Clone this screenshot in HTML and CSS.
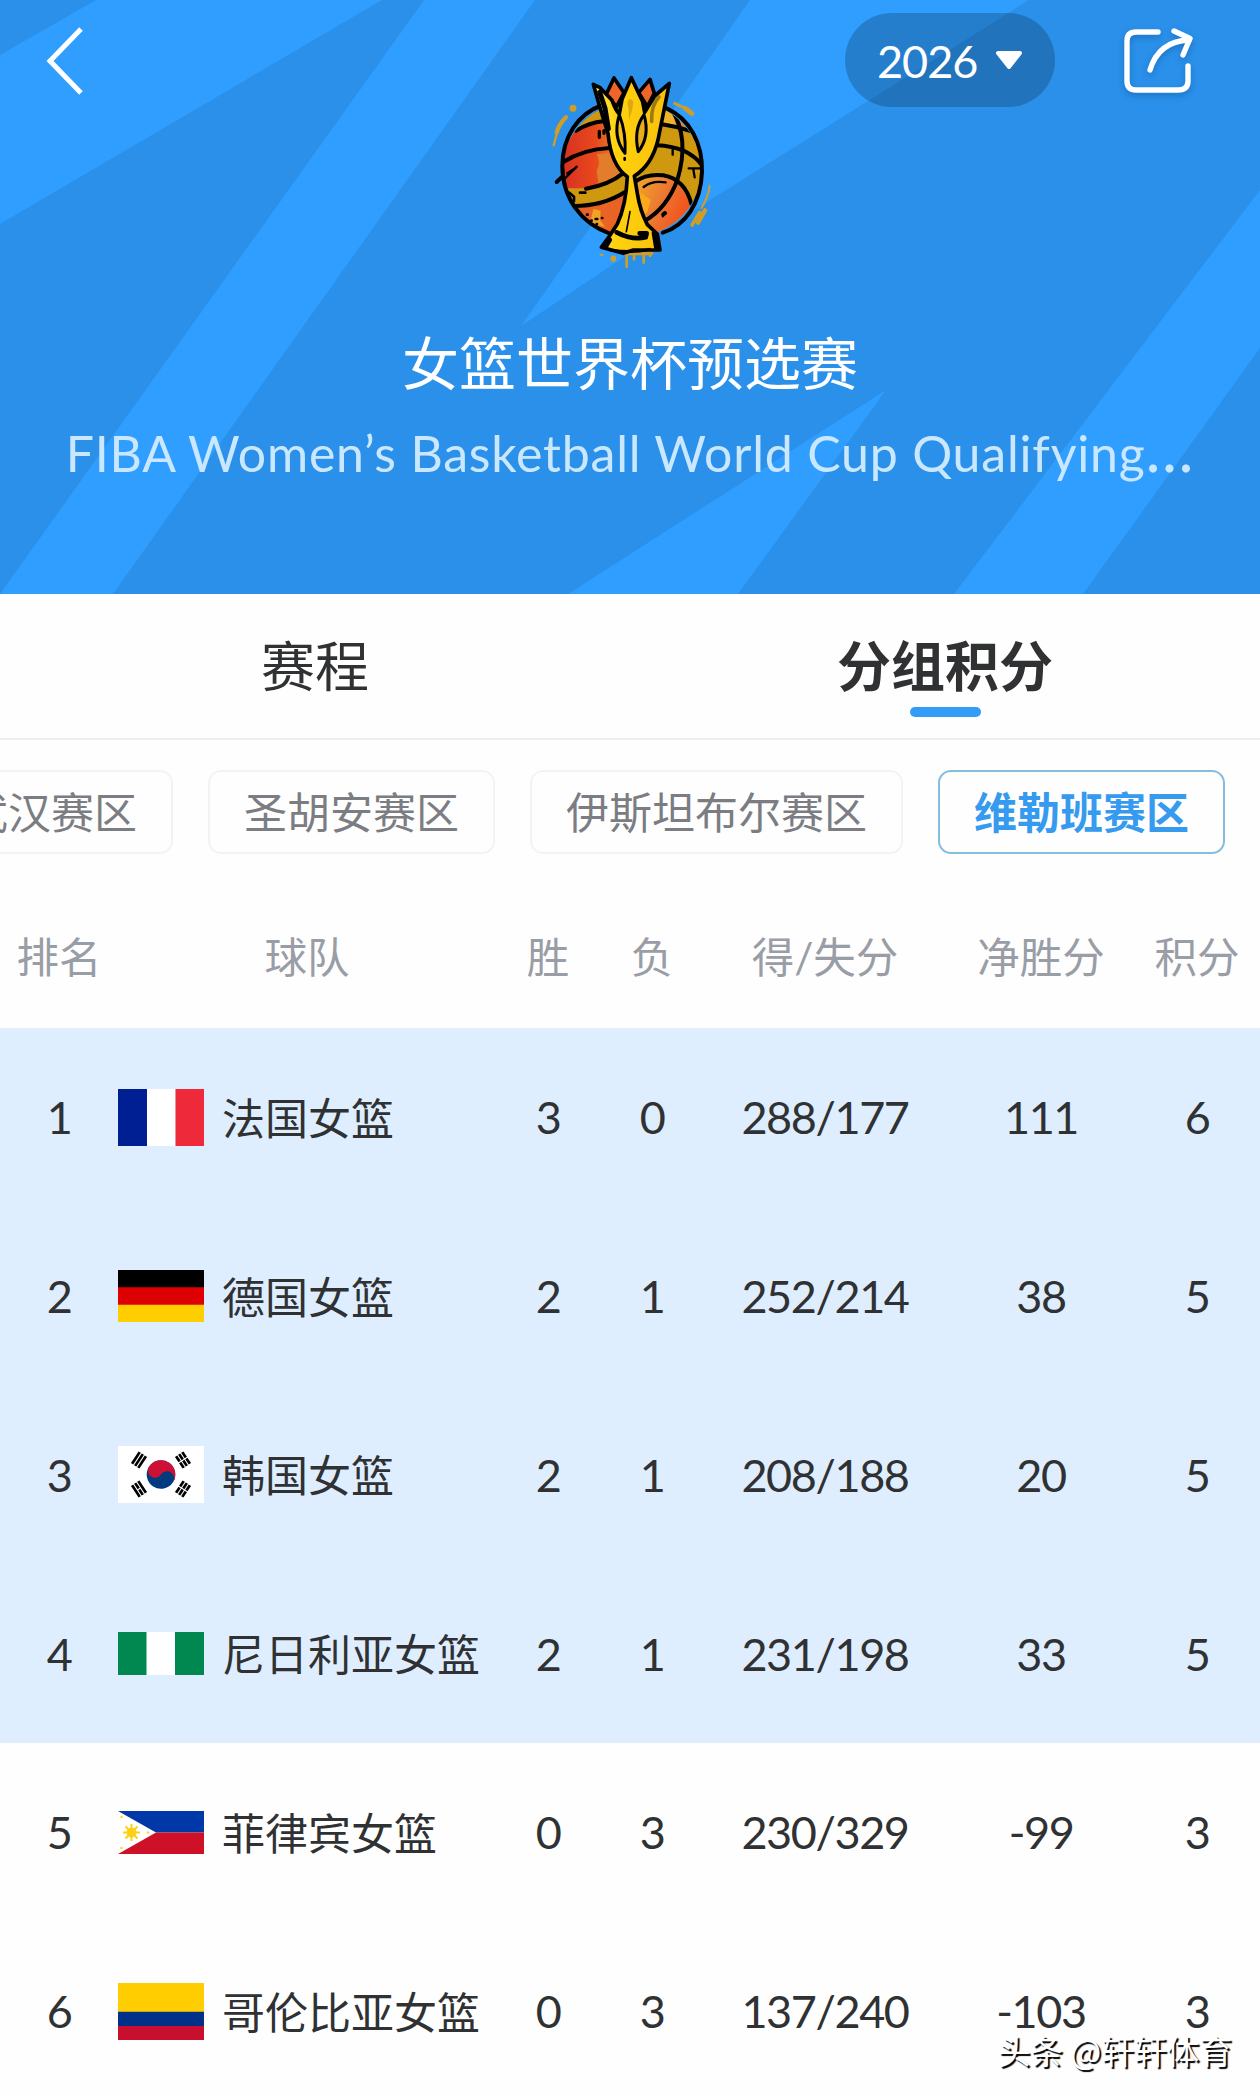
FILE: index.html
```html
<!DOCTYPE html>
<html lang="zh-CN">
  <head>
    <meta charset="UTF-8" />
    <meta name="viewport" content="width=device-width, initial-scale=1.0" />
    <title>女篮世界杯预选赛</title>
    <link rel="stylesheet" href="styles.css">
  </head>
  <body>
    <header class="hero">
      <svg class="hero-bg" viewBox="0 0 1260 594" preserveAspectRatio="none" fill="#2f9eff">
        <path d="M96 0H382L0 224V55Z" />
        <path d="M424 0H535L113 594H0Z" />
        <path d="M750 0H1029L699 207L521 326Z" />
        <path d="M886 390L738 594H568Z" />
        <path d="M1260 190V348L1083 594H954Z" />
      </svg>
      <div class="topbar">
        <svg class="back" viewBox="0 0 44 70" fill="none" stroke="#fff" stroke-width="5">
          <path d="M38 4L7 36L38 68" />
        </svg>
        <div class="year">
          2026
          <svg viewBox="0 0 30 20"><path d="M4 2H26L15 16Z" fill="#fff" stroke="#fff" stroke-width="4" stroke-linejoin="round" /></svg>
        </div>
        <svg class="share" viewBox="0 0 80 76" fill="none" stroke="#fff" stroke-width="5.4" stroke-linecap="round" stroke-linejoin="round">
          <path d="M38 9H16Q7 9 7 18V58Q7 67 16 67H58Q68 67 68 58V43" />
          <path d="M30 47C35 30 46 18 69 17" />
          <path d="M54 8L70 15.500L63 32" />
        </svg>
      </div>
      <svg class="logo" viewBox="0 0 600 660" stroke-linecap="round" stroke-linejoin="round">
        <defs>
          <clipPath id="ball"><ellipse cx="306" cy="328" rx="208" ry="202" /></clipPath>
          <linearGradient id="left" x1="0" x2="1">
            <stop offset="0.1" stop-color="#d93222" />
            <stop offset="0.55" stop-color="#e9491c" />
            <stop offset="0.8" stop-color="#e6792b" />
          </linearGradient>
          <linearGradient id="right" x1="0" y1="0" x2="1" y2="0.5">
            <stop offset="0.1" stop-color="#f0a02a" />
            <stop offset="0.5" stop-color="#ec7a33" />
            <stop offset="0.9" stop-color="#f2561f" />
          </linearGradient>
          <linearGradient id="gold" x1="0" x2="1">
            <stop offset="0" stop-color="#ffe45c" />
            <stop offset="0.3" stop-color="#ffd20d" />
            <stop offset="1" stop-color="#f8bf0c" />
          </linearGradient>
        </defs>
        <!-- paint splashes -->
        <g fill="none" stroke="#d09d26">
          <path d="M71 256L80 222" stroke-width="7" />
          <path d="M80 218Q87 193 108 172" stroke-width="13" />
          <circle cx="129" cy="145" r="5" stroke-width="11" />
          <path d="M434 130L458 141L484 160" stroke-width="9" />
          <path d="M466 145L486 161" stroke-width="14" />
          <path d="M539 378Q534 415 514 444" stroke-width="6" />
          <path d="M525 451L504 488" stroke-width="13" />
          <path d="M509 458L486 495" stroke-width="11" />
          <path d="M290 578V620M312 578V598M341 578V608M360 575V588" stroke-width="8" />
          <path d="M286 580H364" stroke-width="12" />
          <path d="M250 595V597" stroke-width="17" />
          <path d="M212 584H218" stroke-width="6" />
        </g>
        <g clip-path="url(#ball)">
          <path d="M90 120H525V535H90Z" fill="#ce980f" />
          <path d="M85 246Q145 197 240 185L290 330L240 370L170 385H85Z" fill="url(#left)" />
          <path d="M200 282Q215 310 200 330L207 380L280 345L240 280Z" fill="#e27d2c" />
          <path d="M120 446Q205 442 282 400L270 500L220 540L120 480Z" fill="#e96324" />
          <path d="M190 447L212 452L210 480L225 500L180 490Z" fill="#f0a426" />
          <path d="M315 362Q355 343 410 350Q470 380 482 450L440 500L340 540Z" fill="url(#right)" />
          <path d="M322 390L362 420L352 455L330 480Z" fill="#fba91a" />
          <path d="M398 148L430 155L455 200L395 190Z" fill="#efb32b" />
          <path d="M428 162L460 180L466 208L440 205Z" fill="#e9813b" />
          <g fill="none" stroke="#000" stroke-width="12">
            <path d="M138 212Q178 188 220 184" />
            <path d="M100 306Q160 268 238 264" />
            <path d="M168 386Q235 376 282 338" />
            <path d="M124 438Q216 440 285 396" />
            <path d="M380 190Q435 198 492 216" />
            <path d="M380 256Q475 260 516 316" />
            <path d="M316 365Q350 340 400 346Q465 358 484 432" />
            <path d="M425 148Q480 235 442 360Q410 445 345 482" />
            <path d="M341 381Q366 361 407 367" stroke-width="7" />
            <path d="M98 362L140 320M112 340L136 325" stroke-width="7" />
            <path d="M476 325H520M490 328L494 352M428 262V284" stroke-width="7" />
            <path d="M118 398L132 410L132 424M150 398H166" stroke-width="8" />
            <path d="M208 214V232M222 212V220" stroke-width="10" />
            <path d="M171 464H173M184 482H185M197 477H202M200 492H201M216 474H217" stroke-width="8" />
            <path d="M396 463Q406 450 409 460L398 470Z" fill="#000" stroke-width="5" />
          </g>
        </g>
        <g fill="none" stroke="#000" stroke-width="12">
          <path d="M218 135C145 160 97 230 97 318C97 415 155 491 238 520" />
          <path d="M410 145C480 177 518 250 516 335C513 431 465 497 398 518" />
          <path d="M80 366L99 348" />
        </g>
        <!-- trophy -->
        <g stroke="#000" stroke-width="11">
          <path d="M252 54L282 98L260 140L228 104Z" fill="#ef6528" />
          <path d="M360 58L373 100L352 140L326 98Z" fill="#ef6528" />
          <path d="M190 73L209 82L246 121Q258 154 268 162L276 118L304 53L338 125L344 157L374 108L418 70L384 240Q365 316 313 348L322 400Q330 452 352 494L382 522L390 570L310 570L280 580L214 562L238 529L262 492Q288 437 292 350Q243 316 234 220Q206 133 190 73Z" fill="url(#gold)" />
          <path d="M268 164Q289 220 285 280Q247 230 268 164Z" fill="#f6c315" stroke-width="9" />
          <path d="M342 164Q309 210 325 275Q361 229 342 164Z" fill="#e5ad16" stroke-width="9" />
          <path d="M209 97L225 145L235 206" fill="none" stroke-width="15" />
          <path d="M260 517Q305 541 347 532L350 520H329" fill="none" stroke-width="14" />
          <path d="M245 571Q310 580 359 568" fill="none" stroke-width="9" />
          <path d="M300 455L289 515" fill="none" stroke-width="5" />
          <path d="M284 294V299" stroke-width="8" />
          <path d="M373 520L380 562M238 540L226 560" fill="none" stroke-width="16" />
        </g>
        <path d="M292 126Q301 108 310 126L307 147Q301 166 297 182L296 148Z" fill="#dda70e" />
        <path d="M387 111Q363 135 365 184" fill="none" stroke="#765b0f" stroke-width="11" opacity="0.7" />
      </svg>
      <h1>女篮世界杯预选赛</h1>
      <p class="subtitle">FIBA Women’s Basketball World Cup Qualifying<span class="more">…</span></p>
    </header>

    <nav class="tabs">
      <div class="tab">赛程</div>
      <div class="tab active">分组积分</div>
    </nav>

    <div class="zones">
      <div class="zone">武汉赛区</div>
      <div class="zone">圣胡安赛区</div>
      <div class="zone">伊斯坦布尔赛区</div>
      <div class="zone active">维勒班赛区</div>
    </div>

    <main class="table">
      <div class="row head">
        <div>排名</div>
        <div>球队</div>
        <div>胜</div>
        <div>负</div>
        <div>得/失分</div>
        <div>净胜分</div>
        <div>积分</div>
      </div>
      <div class="row up">
        <div>1</div>
        <div class="team">
          <svg class="flag" height="57" viewBox="0 0 86 57">
            <path d="M0 0H29V57H0Z" fill="#001f92" />
            <path d="M29 0H57.500V57H29Z" fill="#fff" />
            <path d="M57.500 0H86V57H57.500Z" fill="#ee2a3a" />
          </svg>
          <span>法国女篮</span>
        </div>
        <div>3</div>
        <div>0</div>
        <div>288/177</div>
        <div>111</div>
        <div>6</div>
      </div>
      <div class="row up">
        <div>2</div>
        <div class="team">
          <svg class="flag" height="52" viewBox="0 0 86 52">
            <path d="M0 0H86V52H0Z" />
            <path d="M0 17.300H86V52H0Z" fill="#de0000" />
            <path d="M0 34.700H86V52H0Z" fill="#ffce00" />
          </svg>
          <span>德国女篮</span>
        </div>
        <div>2</div>
        <div>1</div>
        <div>252/214</div>
        <div>38</div>
        <div>5</div>
      </div>
      <div class="row up">
        <div>3</div>
        <div class="team">
          <svg class="flag" height="57" viewBox="0 0 86 57">
            <path d="M0 0H86V57H0Z" fill="#fff" />
            <g transform="translate(43 28.500)">
              <g transform="rotate(33)">
                <circle r="14.300" fill="#003a7f" />
                <path d="M-14.300 0A14.300 14.300 0 0 1 14.300 0A7.150 7.150 0 0 0 0 0A7.150 7.150 0 0 1 -14.300 0Z" fill="#cf1035" />
              </g>
              <g stroke="#000" stroke-width="2.700" fill="none">
                <path d="M-3.700 -7V7M0 -7V7M3.700 -7V7" transform="translate(-22 -14.500) rotate(33)" />
                <path d="M-3.700 -7V7M0 -7V7M3.700 -7V7" stroke-dasharray="6.500 1" transform="translate(22 -14.500) rotate(-33)" />
                <path d="M-3.700 -7V7M0 -7V-.5M0 .5V7M3.700 -7V7" transform="translate(-22 14.500) rotate(-33)" />
                <path d="M-3.700 -7V7M0 -7V7M3.700 -7V7" stroke-dasharray="6.500 1" transform="translate(22 14.500) rotate(33)" />
              </g>
            </g>
          </svg>
          <span>韩国女篮</span>
        </div>
        <div>2</div>
        <div>1</div>
        <div>208/188</div>
        <div>20</div>
        <div>5</div>
      </div>
      <div class="row up">
        <div>4</div>
        <div class="team">
          <svg class="flag" height="43" viewBox="0 0 86 43">
            <path d="M0 0H86V43H0Z" fill="#008850" />
            <path d="M28.500 0H57V43H28.500Z" fill="#fff" />
          </svg>
          <span>尼日利亚女篮</span>
        </div>
        <div>2</div>
        <div>1</div>
        <div>231/198</div>
        <div>33</div>
        <div>5</div>
      </div>
      <div class="row">
        <div>5</div>
        <div class="team">
          <svg class="flag" height="43" viewBox="0 0 86 43">
            <path d="M0 0H86V21.500H0Z" fill="#0038a8" />
            <path d="M0 21.500H86V43H0Z" fill="#ce1126" />
            <path d="M0 0L38 21.500L0 43Z" fill="#fff" />
            <g fill="#fcd116" stroke="#fcd116">
              <circle cx="13.500" cy="21.500" r="4.500" />
              <path d="M13.500 13V30M5 21.500H22M7.500 15.500L19.500 27.500M19.500 15.500L7.500 27.500" stroke-width="2" />
              <circle cx="3.500" cy="6" r=".8" />
              <circle cx="3.500" cy="37" r=".8" />
              <circle cx="30" cy="21.500" r=".8" />
            </g>
          </svg>
          <span>菲律宾女篮</span>
        </div>
        <div>0</div>
        <div>3</div>
        <div>230/329</div>
        <div>-99</div>
        <div>3</div>
      </div>
      <div class="row">
        <div>6</div>
        <div class="team">
          <svg class="flag" height="57" viewBox="0 0 86 57">
            <path d="M0 0H86V29H0Z" fill="#ffcd00" />
            <path d="M0 28.700H86V43H0Z" fill="#003087" />
            <path d="M0 43H86V57H0Z" fill="#c8102e" />
          </svg>
          <span>哥伦比亚女篮</span>
        </div>
        <div>0</div>
        <div>3</div>
        <div>137/240</div>
        <div>-103</div>
        <div>3</div>
      </div>
    </main>
    <div class="watermark">头条 @轩轩体育</div>
  </body>
</html>
```
FILE: styles.css
```css
* {
  box-sizing: border-box;
}
body {
  position: relative;
  width: 1260px;
  height: 2096px;
  margin: 0;
  overflow: hidden;
  background: #fefefe;
  color: #303133;
  font-family: Lato, "Noto Sans CJK SC", sans-serif;
}
svg {
  display: block;
  flex: none;
}

.hero {
  position: relative;
  height: 594px;
  background: #2a90ea;
  color: #fff;
  text-align: center;
}
.hero-bg {
  position: absolute;
  top: 0;
  left: 0;
  width: 100%;
  height: 100%;
}
.topbar {
  position: relative;
  display: flex;
  align-items: center;
  height: 107px;
  padding: 13px 60px 0 43px;
}
.back {
  width: 44px;
  height: 70px;
}
.year {
  display: flex;
  align-items: center;
  gap: 17px;
  width: 210px;
  height: 94px;
  margin-left: auto;
  padding: 2px 0 0 32px;
  border-radius: 47px;
  background: rgba(0, 0, 0, 0.2);
  font-size: 45px;
  letter-spacing: -1px;
}
.year svg {
  width: 30px;
  height: 20px;
}
.share {
  width: 80px;
  height: 76px;
  margin: 2px 0 0 65px;
  filter: drop-shadow(0 3px 3px rgba(0, 50, 110, 0.3));
}
.logo {
  position: relative;
  width: 200px;
  height: 220px;
  margin: -47px auto 0;
}
h1 {
  position: relative;
  margin: 43px 0 0;
  font-size: 57px;
  font-weight: 400;
  line-height: 80px;
}
.subtitle {
  position: relative;
  margin: 20px 0 0;
  color: #c9e8ff;
  font-size: 50px;
  line-height: 60px;
  letter-spacing: 0.8px;
  white-space: nowrap;
}
.more {
  font-size: 64px;
  line-height: 0;
}

.tabs {
  display: flex;
  height: 146px;
  border-bottom: 2px solid #ededed;
}
.tab {
  flex: 1;
  padding-top: 33px;
  font-size: 54px;
  line-height: 80px;
  text-align: center;
}
.tab.active {
  font-weight: bold;
}
.tab.active::after {
  content: "";
  display: block;
  width: 71px;
  height: 10px;
  margin: 0 auto;
  border-radius: 5px;
  background: #339cf7;
}

.zones {
  display: flex;
  justify-content: flex-end;
  gap: 35px;
  padding: 30px 35px 0 0;
}
.zone {
  flex: none;
  height: 84px;
  padding: 0 34px;
  border: 2px solid #f3f3f4;
  border-radius: 13px;
  color: #7b7d82;
  font-size: 43px;
  line-height: 81px;
}
.zone.active {
  border-color: #86bddf;
  color: #369bef;
  font-weight: bold;
}

.row {
  display: grid;
  grid-template-columns: 118px 378px 104px 104px 242px 190px 122px;
  align-items: center;
  height: 178.75px;
  font-size: 45px;
  letter-spacing: -1.4px;
  text-align: center;
}
.row.up {
  background: #deeeff;
}
.row.head {
  height: 174px;
  padding-top: 26px;
  color: #999da6;
  font-size: 42.5px;
  letter-spacing: 0;
}
.team {
  display: flex;
  align-items: center;
  gap: 18px;
  font-size: 43px;
  letter-spacing: 0;
  white-space: nowrap;
}
.team span {
  padding-bottom: 3px;
}
.flag {
  width: 86px;
}

.watermark {
  position: absolute;
  right: 28px;
  bottom: 24px;
  color: #fff;
  font-family: "Noto Sans CJK SC", sans-serif;
  font-size: 32.7px;
  line-height: 44px;
  text-shadow: 2px 2px 1px #000;
}
```
